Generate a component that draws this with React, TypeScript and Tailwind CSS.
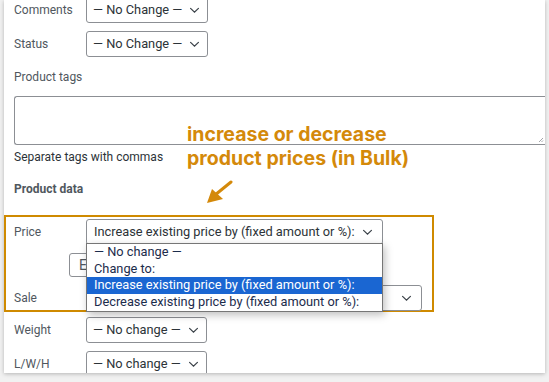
import React from "react";

const FONT = { fontFamily: "Roboto, 'Noto Sans', sans-serif" };

function Chevron() {
  return (
    <svg viewBox="0 0 12 8" className="ml-auto w-[11px] h-[7px] shrink-0" aria-hidden="true">
      <path d="M1.5 1.5 6 6l4.5-4.5" stroke="#3c434a" strokeWidth="1.4" fill="none" strokeLinecap="round" />
    </svg>
  );
}

function Select({ label, width, className = "" }: { label: string; width: string; className?: string }) {
  return (
    <div
      className={`flex items-center gap-[4px] h-[26px] pl-[6px] pr-[7px] rounded-[3px] border border-[#8c8f94] bg-white text-[12.8px] text-[#2c3338] ${width} ${className}`}
    >
      <span className="whitespace-nowrap">{label}</span>
      <Chevron />
    </div>
  );
}

function Row({ label, children, className = "" }: { label: string; children: React.ReactNode; className?: string }) {
  return (
    <div className={`flex items-center ${className}`}>
      <span className="w-[72px] text-[12px] text-[#50575e]">{label}</span>
      {children}
    </div>
  );
}

export default function App() {
  return (
    <div className="w-[549px] h-[382px] bg-[#f1f1f1] overflow-hidden" style={FONT}>
      <div className="relative ml-[4px] w-[541px] h-[373px] bg-white shadow-[0_1px_4px_rgba(0,0,0,0.25)] overflow-hidden">
        <div className="pl-[10px]">
          <Row label="Comments" className="mt-[-3px]">
            <Select label="— No Change —" width="w-[122px]" />
          </Row>
          <Row label="Status" className="mt-[8px]">
            <Select label="— No Change —" width="w-[122px]" />
          </Row>
          <p className="mt-[12px] text-[12px] leading-[16px] text-[#50575e]">Product tags</p>
          <div className="relative mt-[11px] h-[49px] border border-r-0 border-[#8c8f94] rounded-l-[3px]">
            <svg viewBox="0 0 6 6" className="absolute right-[1px] bottom-[1px] w-[6px] h-[6px]" aria-hidden="true">
              <path d="M5 1 1 5M5 3.5 3.5 5" stroke="#8c8f94" strokeWidth="0.8" />
            </svg>
          </div>
          <p className="mt-[4px] text-[12px] leading-[16px] text-[#2c3338]">Separate tags with commas</p>
          <p className="mt-[16px] text-[12px] leading-[16px] font-bold text-[#50575e]">Product data</p>
        </div>

        {/* highlighted price box */}
        <div className="mt-[18px] w-[430px] h-[97px] border-2 border-[#cf8a00] pl-[8px] pt-[2px]">
          <Row label="Price">
            <Select label="Increase existing price by (fixed amount or %):" width="w-[297px]" className="pl-[7px] pr-[9px]" />
          </Row>
          <div className="mt-[8px] ml-[55px] w-[40px] h-[24px] rounded-[3px] border border-[#8c8f94] pl-[9px] text-[14px] leading-[22px] text-[#50575e]">
            E
          </div>
          <Row label="Sale" className="mt-[8px]">
            <Select label="" width="w-[336px]" className="pr-[9px]" />
          </Row>
        </div>

        <div className="pl-[10px] pt-[5px]">
          <Row label="Weight">
            <Select label="— No change —" width="w-[121px]" />
          </Row>
          <Row label="L/W/H" className="mt-[8px]">
            <Select label="— No change —" width="w-[121px]" />
          </Row>
        </div>

        {/* open dropdown list */}
        <div className="absolute left-[82px] top-[243px] w-[297px] border border-[#767676] bg-white text-[12.8px] leading-[16.7px] whitespace-nowrap text-[#1c2c4c] shadow-[2px_3px_8px_rgba(0,0,0,0.25)]">
          <div className="px-[7px]">— No change —</div>
          <div className="px-[7px]">Change to:</div>
          <div className="px-[7px] bg-[#1a66d2] text-white">Increase existing price by (fixed amount or %):</div>
          <div className="px-[7px]">Decrease existing price by (fixed amount or %):</div>
        </div>

        {/* annotation */}
        <div
          className="absolute left-[183px] top-[122px] text-[19.5px] leading-[24px] font-bold text-[#d4890a]"
          style={{ fontFamily: "Inter, Roboto, sans-serif" }}
        >
          <div>increase or decrease</div>
          <div>product prices (in Bulk)</div>
        </div>
        <svg viewBox="0 0 30 26" className="absolute left-[200px] top-[180px] w-[30px] h-[26px]" aria-hidden="true">
          <path d="M27 2 11 15" stroke="#d4890a" strokeWidth="3" strokeLinecap="round" />
          <path d="M3 23 8 9l11 10z" fill="#d4890a" />
        </svg>
      </div>
    </div>
  );
}
